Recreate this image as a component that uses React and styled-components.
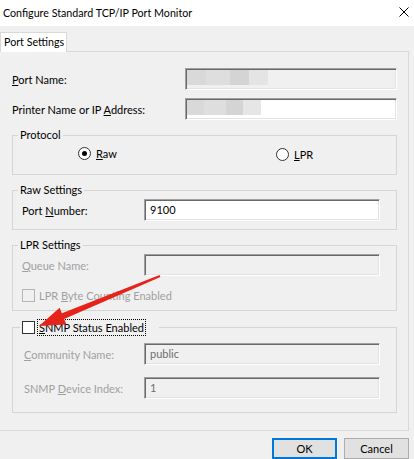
import React from "react";
import styled, { createGlobalStyle } from "styled-components";

const Global = createGlobalStyle`
  html, body { margin: 0; padding: 0; background: #f0f0f0; }
  body { font-family: Lato, "Noto Sans", sans-serif; font-size: 11px; color: #000; }
  * { box-sizing: border-box; }
`;

const Window = styled.div`
  position: relative;
  width: 414px;
  height: 459px;
  background: #f0f0f0;
  overflow: hidden;
`;

const TitleBar = styled.div`
  height: 26px;
  background: #fff;
  display: flex;
  align-items: center;
  justify-content: space-between;
  padding: 0 5px 2px 3px;
`;

const Title = styled.span`
  font-size: 10.7px;
  color: #000;
`;

const TabStrip = styled.div`
  margin-top: 6px;
  height: 19px;
  display: flex;
  position: relative;
  z-index: 1;
`;

const Tab = styled.div`
  height: 20px;
  background: #fff;
  border: 1px solid #d9d9d9;
  border-bottom: none;
  padding: 1px 2px 0 3px;
  line-height: 16px;
  font-size: 10.7px;
  white-space: nowrap;
`;

const Panel = styled.div`
  width: 409px;
  border: 1px solid #d9d9d9;
  border-left-color: #f0f0f0;
  padding: 16px 11px 17px 11px;
`;

const FieldGrid = styled.div`
  display: grid;
  grid-template-columns: ${(p) => p.$label}px 1fr;
  row-gap: ${(p) => p.$gap || 8}px;
  align-items: center;
`;

const Label = styled.span`
  color: ${(p) => (p.$disabled ? "#a0a0a0" : "#000")};
  white-space: nowrap;
  padding-left: ${(p) => p.$indent || 0}px;
`;

const U = styled.span`
  text-decoration: underline;
  text-underline-offset: 1px;
`;

const TextBox = styled.div`
  height: 22px;
  background: ${(p) => (p.$enabled ? "#fff" : "#f0f0f0")};
  border-top: 1px solid #a0a0a0;
  border-left: 1px solid #a0a0a0;
  border-bottom: 1px solid #fff;
  border-right: 1px solid #fff;
  box-shadow: inset 1px 1px 0 #696969, inset -1px -1px 0 #e3e3e3;
  display: flex;
  align-items: center;
  padding: 0 5px 1px;
  color: ${(p) => (p.$enabled ? "#000" : "#6d6d6d")};
`;

const Redaction = styled.span`
  display: block;
  align-self: flex-start;
  margin: 1px 0 0 -4px;
  width: ${(p) => p.$w}px;
  height: 15px;
  background: linear-gradient(
    to right,
    #d9d9d9 0 23%,
    #dedede 23% 53%,
    #d4d4d4 53% 76%,
    ${(p) => p.$tail} 76% 100%
  );
`;

const Group = styled.fieldset`
  margin: 8px 0 0 0;
  padding: ${(p) => p.$pt}px 16px ${(p) => p.$pb}px 9px;
  border: 1px solid #d5d5d5;
  min-inline-size: 0;
`;

const Legend = styled.legend`
  margin-left: -4px;
  padding: 0 2px;
  line-height: 14px;
`;

const CheckLegend = styled.legend`
  margin-left: -2px;
  padding: 0 14px 0 2px;
  height: 16px;
  display: flex;
  align-items: center;
  gap: 3px;
`;

const RadioRow = styled.div`
  display: grid;
  grid-template-columns: 198px auto;
  padding-left: 56px;
  height: 14px;
  align-items: center;
`;

const Choice = styled.label`
  display: flex;
  align-items: center;
  gap: 5px;
  margin-top: ${(p) => p.$drop || 0}px;
`;

const Radio = styled.span`
  width: 13px;
  height: 13px;
  border-radius: 50%;
  border: 1px solid #333;
  background: #fff;
  display: flex;
  align-items: center;
  justify-content: center;
  &::after {
    content: "";
    width: 5px;
    height: 5px;
    border-radius: 50%;
    background: ${(p) => (p.$on ? "#000" : "transparent")};
  }
`;

const Check = styled.span`
  width: 13px;
  height: 13px;
  flex: none;
  border: 1px solid ${(p) => (p.$disabled ? "#b5b5b5" : "#333")};
  background: ${(p) => (p.$disabled ? "#f0f0f0" : "#fff")};
`;

const CheckRow = styled.div`
  display: flex;
  align-items: center;
  gap: 4px;
  margin-top: 13px;
  height: 13px;
  color: #a0a0a0;
`;

const FocusText = styled.span`
  outline: 1px dotted #000;
  padding: 0 1px;
  line-height: 15px;
`;

const Buttons = styled.div`
  display: flex;
  justify-content: flex-end;
  gap: 7px;
  padding: 7px 5px 0 0;
`;

const Button = styled.button`
  width: 65px;
  height: 21px;
  font: inherit;
  background: #e1e1e1;
  color: #000;
  border: 1px solid ${(p) => (p.$default ? "#0078d7" : "#adadad")};
  box-shadow: ${(p) => (p.$default ? "inset 0 0 0 1px #0078d7" : "none")};
  padding: 0;
`;

const ArrowLayer = styled.svg`
  position: absolute;
  left: 0;
  top: 0;
  pointer-events: none;
`;

function Arrow() {
  return (
    <ArrowLayer width="414" height="459" viewBox="0 0 414 459">
      <polygon
        fill="#e5231b"
        points="160.4,276.9 159.6,275.1 61.9,313.3 59.6,307.8 39,326 66.4,324.4 64.1,318.9"
      />
    </ArrowLayer>
  );
}

function CloseIcon() {
  return (
    <svg width="10" height="10" viewBox="0 0 10 10">
      <path d="M0.5 0.5 L9.5 9.5 M9.5 0.5 L0.5 9.5" stroke="#000" strokeWidth="1" />
    </svg>
  );
}

export default function App() {
  return (
    <Window>
      <Global />
      <TitleBar>
        <Title>Configure Standard TCP/IP Port Monitor</Title>
        <CloseIcon />
      </TitleBar>
      <TabStrip>
        <Tab>Port Settings</Tab>
      </TabStrip>
      <Panel>
        <FieldGrid $label={173}>
          <Label>
            <U>P</U>ort Name:
          </Label>
          <TextBox>
            <Redaction $w={81} $tail="#e4e4e4" />
          </TextBox>
          <Label>
            Printer Name or IP <U>A</U>ddress:
          </Label>
          <TextBox $enabled>
            <Redaction $w={74} $tail="#e6e6e6" />
          </TextBox>
        </FieldGrid>

        <Group $pt={4} $pb={14}>
          <Legend>Protocol</Legend>
          <RadioRow>
            <Choice>
              <Radio $on />
              <span>
                <U>R</U>aw
              </span>
            </Choice>
            <Choice $drop={2}>
              <Radio />
              <span>
                <U>L</U>PR
              </span>
            </Choice>
          </RadioRow>
        </Group>

        <Group $pt={2} $pb={8}>
          <Legend>Raw Settings</Legend>
          <FieldGrid $label={122}>
            <Label>
              Port <U>N</U>umber:
            </Label>
            <TextBox $enabled>9100</TextBox>
          </FieldGrid>
        </Group>

        <Group $pt={2} $pb={8}>
          <Legend>LPR Settings</Legend>
          <FieldGrid $label={122}>
            <Label $disabled>
              <U>Q</U>ueue Name:
            </Label>
            <TextBox />
          </FieldGrid>
          <CheckRow>
            <Check $disabled />
            <span>
              LPR <U>B</U>yte Counting Enabled
            </span>
          </CheckRow>
        </Group>

        <Group $pt={8} $pb={13}>
          <CheckLegend>
            <Check />
            <FocusText>
              <U>S</U>NMP Status Enabled
            </FocusText>
          </CheckLegend>
          <FieldGrid $label={122} $gap={12}>
            <Label $disabled $indent={2}>
              <U>C</U>ommunity Name:
            </Label>
            <TextBox>public</TextBox>
            <Label $disabled $indent={2}>
              SNMP <U>D</U>evice Index:
            </Label>
            <TextBox>1</TextBox>
          </FieldGrid>
        </Group>
      </Panel>
      <Buttons>
        <Button $default>OK</Button>
        <Button>Cancel</Button>
      </Buttons>
      <Arrow />
    </Window>
  );
}
